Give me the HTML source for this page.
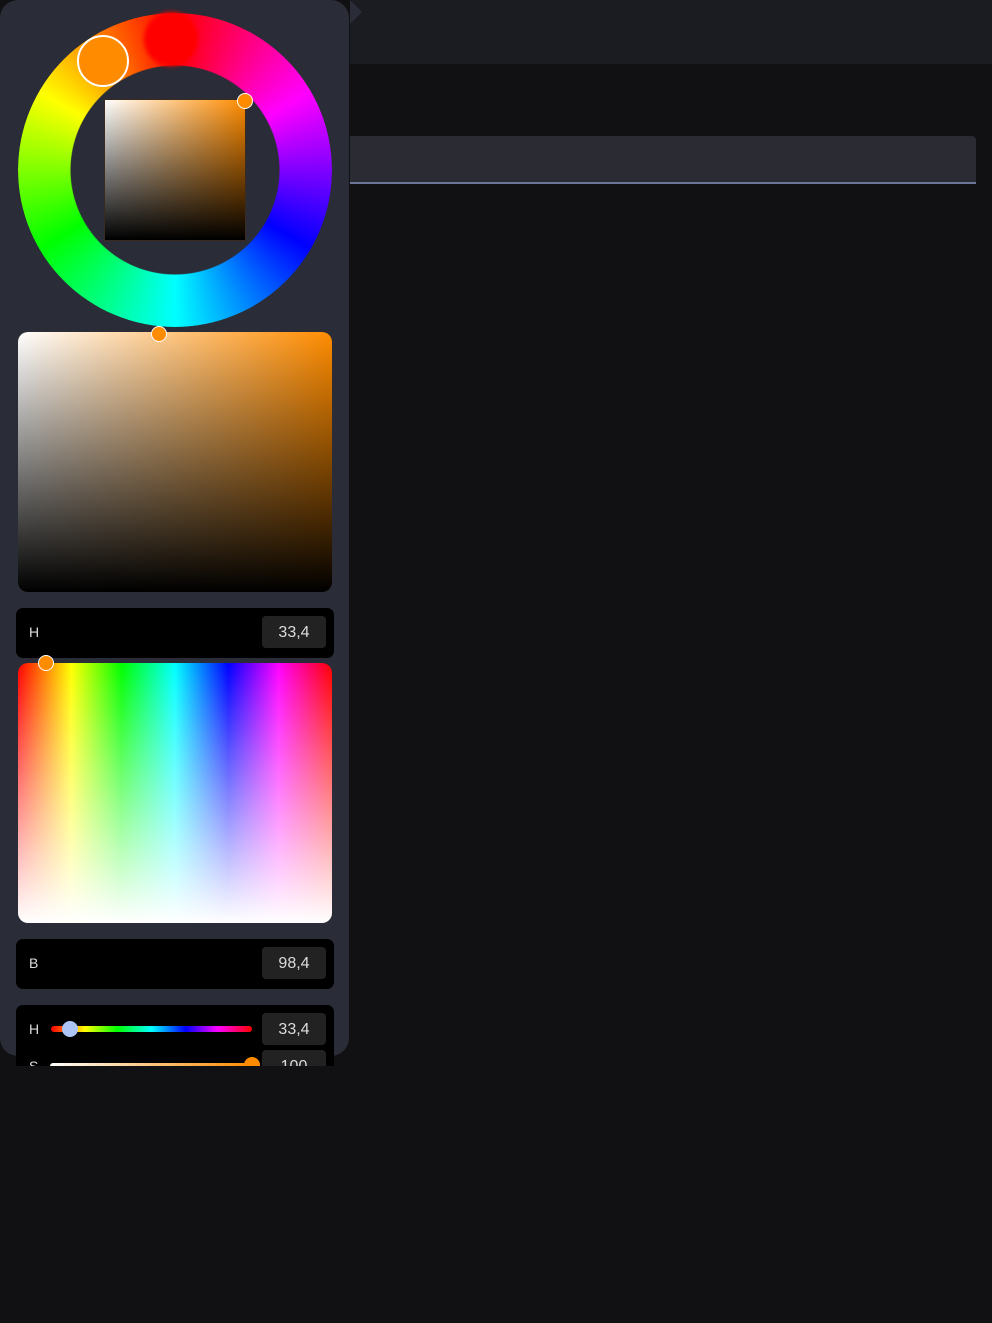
<!DOCTYPE html>
<html><head><meta charset="utf-8"><style>
*{margin:0;padding:0;box-sizing:border-box}
body{width:992px;height:1323px;background:#111114;position:relative;overflow:hidden;font-family:"Liberation Sans",sans-serif}
.top{position:absolute;left:350px;top:0;width:642px;height:64px;background:#1b1c22}
.bar{position:absolute;left:350px;top:136px;width:626px;height:48px;background:#2a2b33;border-bottom:2px solid #6c7596;border-radius:0 4px 0 0}
.tri{position:absolute;left:350px;top:0;width:0;height:0;border-top:12px solid transparent;border-bottom:12px solid transparent;border-left:12px solid #2a2c37}
.clip{position:absolute;left:0;top:0;width:350px;height:1066px;overflow:hidden}
.panel{position:absolute;left:0;top:0;width:349px;height:1056px;background:#2a2c37;border-radius:18px}
.wheel{position:absolute;left:18px;top:13px;width:314px;height:314px;border-radius:50%;background:conic-gradient(#f00,#f0f 60deg,#00f 120deg,#0ff 180deg,#0f0 240deg,#ff0 300deg,#f00 360deg);-webkit-mask:radial-gradient(circle,transparent 104px,#000 105px);mask:radial-gradient(circle,transparent 104px,#000 105px)}
.sv{background:linear-gradient(to bottom,rgba(0,0,0,0),#000),linear-gradient(to right,#fff,#ff8c00)}
.dot{position:absolute;border-radius:50%;background:#ff8c00;border:1.5px solid #fff}
.row{position:absolute;left:16px;width:318px;height:50px;background:#000;border-radius:7px;color:#ddd;font-size:14px}
.row .l{position:absolute;left:13px;top:16px}
.row .v{position:absolute;right:8px;top:8px;width:64px;height:32px;background:#222;border-radius:4px;font-size:16px;text-align:center;line-height:34px;color:#ddd}
</style></head><body>
<div class="top"></div><div class="bar"></div><div class="tri"></div>
<div class="clip">
<div class="panel"></div>
<div class="wheel"></div>
<div style="position:absolute;left:144px;top:12px;width:54px;height:54px;border-radius:50%;background:#f00;filter:blur(2px)"></div>
<div class="dot" style="left:77px;top:35px;width:52px;height:52px;border-width:2px"></div>
<div class="sv" style="position:absolute;left:104px;top:99px;width:142px;height:142px;border:1px solid #3a2a20"></div>
<div class="dot" style="left:237px;top:93px;width:16px;height:16px"></div>
<div class="sv" style="position:absolute;left:18px;top:332px;width:314px;height:260px;border-radius:10px"></div>
<div class="dot" style="left:151px;top:326px;width:16px;height:16px"></div>
<div class="row" style="top:608px"><span class="l">H</span><span class="v">33,4</span></div>
<div style="position:absolute;left:18px;top:663px;width:314px;height:260px;border-radius:10px;background:linear-gradient(to bottom,rgba(255,255,255,0),#fff),linear-gradient(to right,#f00,#ff0 17%,#0f0 33%,#0ff 50%,#00f 67%,#f0f 83%,#f00)"></div>
<div class="dot" style="left:38px;top:655px;width:16px;height:16px"></div>
<div class="row" style="top:939px"><span class="l">B</span><span class="v">98,4</span></div>
<div class="row" style="top:1005px;height:80px">
<span class="l" style="top:16px">H</span>
<div style="position:absolute;left:35px;top:21px;width:201px;height:6px;border-radius:3px;background:linear-gradient(to right,#f00,#ff0 17%,#0f0 33%,#0ff 50%,#00f 67%,#f0f 83%,#f00)"></div>
<div style="position:absolute;left:46px;top:16px;width:16px;height:16px;border-radius:50%;background:#adc4f7"></div>
<span class="v">33,4</span>
<span class="l" style="top:53px">S</span>
<div style="position:absolute;left:34px;top:58px;width:202px;height:6px;border-radius:3px;background:linear-gradient(to right,#fff,#ff8c00)"></div>
<div style="position:absolute;left:228px;top:52px;width:16px;height:16px;border-radius:50%;background:#ff8c00"></div>
<span class="v" style="top:45px">100</span>
</div>
</div>
</body></html>
